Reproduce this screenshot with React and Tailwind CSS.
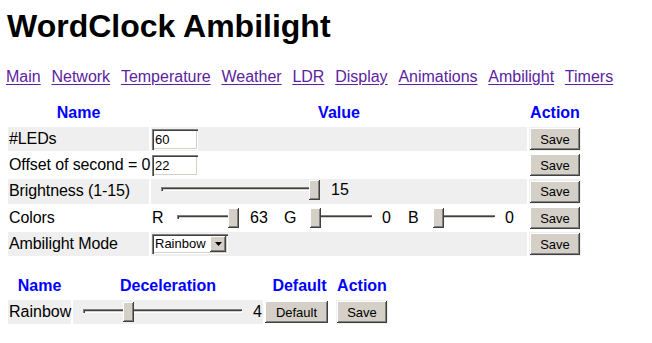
import React from "react";

const raised =
  "shadow-[inset_-1px_-1px_0_#404040,inset_1px_1px_0_#ffffff,inset_-2px_-2px_0_#808080]";
const sunken =
  "shadow-[inset_1px_1px_0_#808080,inset_2px_2px_0_#404040,inset_-1px_-1px_0_#ffffff,inset_-2px_-2px_0_#d4d0c8]";

const links = [
  "Main",
  "Network",
  "Temperature",
  "Weather",
  "LDR",
  "Display",
  "Animations",
  "Ambilight",
  "Timers",
];

const Btn = ({ children, className = "" }) => (
  <button
    className={`h-[22px] bg-[#d4d0c8] text-[13px] leading-none text-black ${raised} ${className}`}
  >
    {children}
  </button>
);

// fake windows trackbar, thumb left computed from value
const Slider = ({ width, frac }) => (
  <div className="relative h-[20px] shrink-0" style={{ width }}>
    <div className={`absolute left-[5px] right-[5px] top-[7px] h-[4px] bg-[#d4d0c8] ${sunken}`} />
    <div
      className={`absolute top-0 h-[20px] w-[11px] bg-[#d4d0c8] ${raised}`}
      style={{ left: Math.round(frac * (width - 11)) }}
    />
  </div>
);

const TextBox = ({ value }) => (
  <input
    defaultValue={value}
    className={`block h-[21px] w-[46px] bg-white pl-[3px] text-[13px] text-black outline-none ${sunken}`}
  />
);

const Select = () => (
  <div className={`flex h-[20px] w-[76px] items-center bg-white pl-[3px] pr-[2px] ${sunken}`}>
    <span className="flex-1 text-[13px] leading-none">Rainbow</span>
    <span className={`flex h-[16px] w-[16px] items-center justify-center bg-[#d4d0c8] ${raised}`}>
      <svg width="7" height="4" viewBox="0 0 7 4">
        <path d="M0 0h7L3.5 4z" fill="#000" />
      </svg>
    </span>
  </div>
);

const Row = ({ gray, name, children }) => {
  const bg = gray ? "bg-[#efefef]" : "";
  return (
    <tr className="h-[24px]">
      <td className={`${bg} whitespace-nowrap px-px pb-px align-middle tracking-[-0.1px]`}>{name}</td>
      <td className={`${bg} p-px align-middle`}>{children}</td>
      <td className={`${bg} p-px align-middle`}>
        <Btn className="block w-[50px]">Save</Btn>
      </td>
    </tr>
  );
};

export default function App() {
  return (
    <div className="min-h-[343px] bg-white pl-[6px] pt-[8px] font-['Liberation_Sans',Arial,sans-serif] text-[16px] text-black">
      <h1 className="ml-px text-[32px] font-bold leading-[36px]">WordClock Ambilight</h1>

      <div className="mt-[24px] flex gap-[10.75px] leading-[18px]">
        {links.map((l) => (
          <a key={l} href="#" className="text-[#5b23a0] underline underline-offset-2">
            {l}
          </a>
        ))}
      </div>

      <table className="mt-[13px] w-[577px] table-fixed border-separate border-spacing-[2px] leading-[18px]">
        <thead>
          <tr className="h-[24px] text-[#0000ff]">
            <th className="w-[141px] p-px font-bold">Name</th>
            <th className="w-[376px] p-px font-bold">Value</th>
            <th className="w-[52px] p-px font-bold">Action</th>
          </tr>
        </thead>
        <tbody>
          <Row gray name="#LEDs">
            <TextBox value="60" />
          </Row>
          <Row name="Offset of second = 0">
            <TextBox value="22" />
          </Row>
          <Row gray name="Brightness (1-15)">
            <div className="flex items-center pb-[3px]">
              <div className="w-[4px]" />
              <Slider width={164} frac={1} />
              <span className="pl-[11px]">15</span>
            </div>
          </Row>
          <Row name="Colors">
            <div className="flex items-center pb-[1px]">
              <span className="w-[20px]">R</span>
              <Slider width={67} frac={1} />
              <span className="w-[45px] pl-[11px]">63</span>
              <span className="w-[26px]">G</span>
              <Slider width={67} frac={0} />
              <span className="w-[31px] pl-[5px]">0</span>
              <span className="w-[25px]">B</span>
              <Slider width={67} frac={0} />
              <span className="pl-[5px]">0</span>
            </div>
          </Row>
          <Row gray name="Ambilight Mode">
            <div className="pb-[1px]">
              <Select />
            </div>
          </Row>
        </tbody>
      </table>

      <table className="mt-[14px] w-[384px] table-fixed border-separate border-spacing-[2px] leading-[18px]">
        <thead>
          <tr className="h-[24px] text-[#0000ff]">
            <th className="w-[63px] p-px font-bold">Name</th>
            <th className="w-[190px] p-px font-bold">Deceleration</th>
            <th className="w-[69px] p-px font-bold">Default</th>
            <th className="w-[52px] p-px font-bold">Action</th>
          </tr>
        </thead>
        <tbody>
          <tr className="h-[24px]">
            <td className="bg-[#efefef] px-px pb-px">Rainbow</td>
            <td className="bg-[#efefef] p-px">
              <div className="flex items-center pb-[1px]">
                <div className="w-[4px]" />
                <Slider width={169} frac={45 / 158} />
                <span className="pl-[6px]">4</span>
              </div>
            </td>
            <td className="p-0">
              <Btn className="block w-[63px]">Default</Btn>
            </td>
            <td className="bg-[#efefef] p-px">
              <Btn className="block w-[50px]">Save</Btn>
            </td>
          </tr>
        </tbody>
      </table>
    </div>
  );
}
